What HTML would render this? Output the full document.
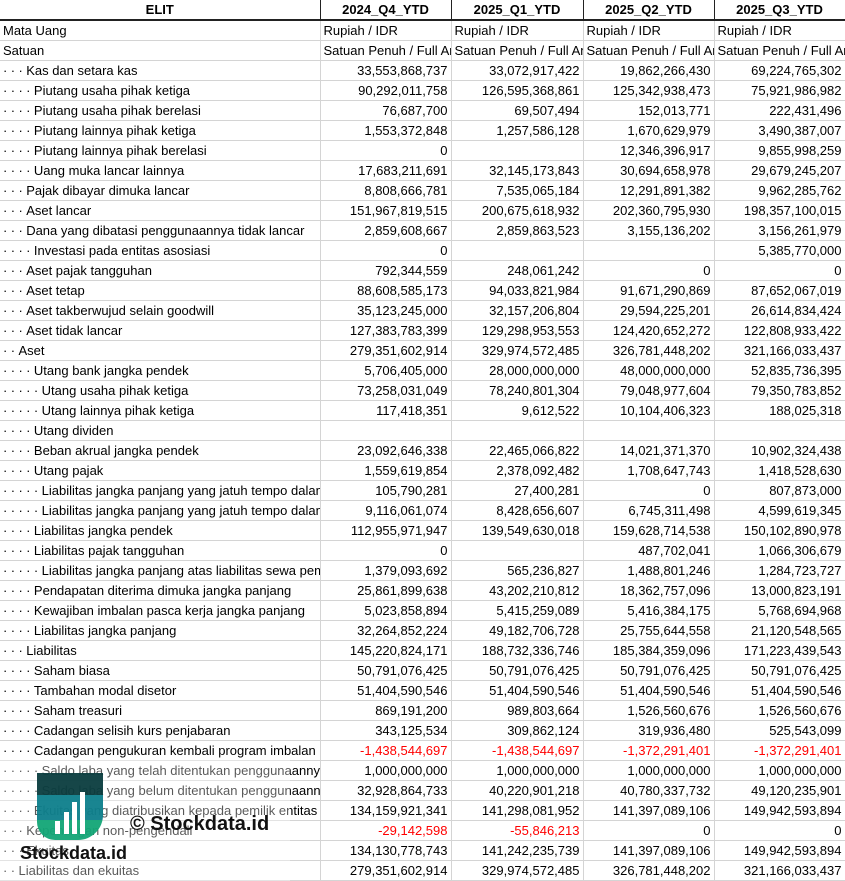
<!DOCTYPE html>
<html><head><meta charset="utf-8"><style>
body{margin:0;width:845px;height:881px;overflow:hidden;background:#fff;font-family:"Liberation Sans",sans-serif;font-size:13px;color:#000;position:relative}
table{border-collapse:collapse;table-layout:fixed;width:978px}
td{height:19px;padding:0 3px;border-right:1px solid #d4d4d4;border-bottom:1px solid #d4d4d4;white-space:nowrap;overflow:hidden;text-align:right;line-height:19px}
td.l{text-align:left}
tr.h td{font-weight:bold;text-align:center;border-right:1px solid #222;border-bottom:2px solid #222;height:18px}
i{font-style:normal;letter-spacing:3.4px}
.r{color:#f00}
.wm{position:absolute;left:0;top:760px}
</style></head><body>
<table>
<colgroup><col style="width:320px"><col style="width:131px"><col style="width:132px"><col style="width:131px"><col style="width:131px"><col style="width:133px"></colgroup>
<tr class="h"><td>ELIT</td><td>2024_Q4_YTD</td><td>2025_Q1_YTD</td><td>2025_Q2_YTD</td><td>2025_Q3_YTD</td><td></td></tr>
<tr><td class="l">Mata Uang</td><td class="l">Rupiah / IDR</td><td class="l">Rupiah / IDR</td><td class="l">Rupiah / IDR</td><td class="l">Rupiah / IDR</td><td></td></tr>
<tr><td class="l">Satuan</td><td class="l">Satuan Penuh / Full Amount</td><td class="l">Satuan Penuh / Full Amount</td><td class="l">Satuan Penuh / Full Amount</td><td class="l">Satuan Penuh / Full Amount</td><td></td></tr>
<tr><td class="l"><i>···</i>Kas dan setara kas</td><td>33,553,868,737</td><td>33,072,917,422</td><td>19,862,266,430</td><td>69,224,765,302</td><td></td></tr>
<tr><td class="l"><i>····</i>Piutang usaha pihak ketiga</td><td>90,292,011,758</td><td>126,595,368,861</td><td>125,342,938,473</td><td>75,921,986,982</td><td></td></tr>
<tr><td class="l"><i>····</i>Piutang usaha pihak berelasi</td><td>76,687,700</td><td>69,507,494</td><td>152,013,771</td><td>222,431,496</td><td></td></tr>
<tr><td class="l"><i>····</i>Piutang lainnya pihak ketiga</td><td>1,553,372,848</td><td>1,257,586,128</td><td>1,670,629,979</td><td>3,490,387,007</td><td></td></tr>
<tr><td class="l"><i>····</i>Piutang lainnya pihak berelasi</td><td>0</td><td></td><td>12,346,396,917</td><td>9,855,998,259</td><td></td></tr>
<tr><td class="l"><i>····</i>Uang muka lancar lainnya</td><td>17,683,211,691</td><td>32,145,173,843</td><td>30,694,658,978</td><td>29,679,245,207</td><td></td></tr>
<tr><td class="l"><i>···</i>Pajak dibayar dimuka lancar</td><td>8,808,666,781</td><td>7,535,065,184</td><td>12,291,891,382</td><td>9,962,285,762</td><td></td></tr>
<tr><td class="l"><i>···</i>Aset lancar</td><td>151,967,819,515</td><td>200,675,618,932</td><td>202,360,795,930</td><td>198,357,100,015</td><td></td></tr>
<tr><td class="l"><i>···</i>Dana yang dibatasi penggunaannya tidak lancar</td><td>2,859,608,667</td><td>2,859,863,523</td><td>3,155,136,202</td><td>3,156,261,979</td><td></td></tr>
<tr><td class="l"><i>····</i>Investasi pada entitas asosiasi</td><td>0</td><td></td><td></td><td>5,385,770,000</td><td></td></tr>
<tr><td class="l"><i>···</i>Aset pajak tangguhan</td><td>792,344,559</td><td>248,061,242</td><td>0</td><td>0</td><td></td></tr>
<tr><td class="l"><i>···</i>Aset tetap</td><td>88,608,585,173</td><td>94,033,821,984</td><td>91,671,290,869</td><td>87,652,067,019</td><td></td></tr>
<tr><td class="l"><i>···</i>Aset takberwujud selain goodwill</td><td>35,123,245,000</td><td>32,157,206,804</td><td>29,594,225,201</td><td>26,614,834,424</td><td></td></tr>
<tr><td class="l"><i>···</i>Aset tidak lancar</td><td>127,383,783,399</td><td>129,298,953,553</td><td>124,420,652,272</td><td>122,808,933,422</td><td></td></tr>
<tr><td class="l"><i>··</i>Aset</td><td>279,351,602,914</td><td>329,974,572,485</td><td>326,781,448,202</td><td>321,166,033,437</td><td></td></tr>
<tr><td class="l"><i>····</i>Utang bank jangka pendek</td><td>5,706,405,000</td><td>28,000,000,000</td><td>48,000,000,000</td><td>52,835,736,395</td><td></td></tr>
<tr><td class="l"><i>·····</i>Utang usaha pihak ketiga</td><td>73,258,031,049</td><td>78,240,801,304</td><td>79,048,977,604</td><td>79,350,783,852</td><td></td></tr>
<tr><td class="l"><i>·····</i>Utang lainnya pihak ketiga</td><td>117,418,351</td><td>9,612,522</td><td>10,104,406,323</td><td>188,025,318</td><td></td></tr>
<tr><td class="l"><i>····</i>Utang dividen</td><td></td><td></td><td></td><td></td><td></td></tr>
<tr><td class="l"><i>····</i>Beban akrual jangka pendek</td><td>23,092,646,338</td><td>22,465,066,822</td><td>14,021,371,370</td><td>10,902,324,438</td><td></td></tr>
<tr><td class="l"><i>····</i>Utang pajak</td><td>1,559,619,854</td><td>2,378,092,482</td><td>1,708,647,743</td><td>1,418,528,630</td><td></td></tr>
<tr><td class="l"><i>·····</i>Liabilitas jangka panjang yang jatuh tempo dalam satu tahun</td><td>105,790,281</td><td>27,400,281</td><td>0</td><td>807,873,000</td><td></td></tr>
<tr><td class="l"><i>·····</i>Liabilitas jangka panjang yang jatuh tempo dalam satu tahun</td><td>9,116,061,074</td><td>8,428,656,607</td><td>6,745,311,498</td><td>4,599,619,345</td><td></td></tr>
<tr><td class="l"><i>····</i>Liabilitas jangka pendek</td><td>112,955,971,947</td><td>139,549,630,018</td><td>159,628,714,538</td><td>150,102,890,978</td><td></td></tr>
<tr><td class="l"><i>····</i>Liabilitas pajak tangguhan</td><td>0</td><td></td><td>487,702,041</td><td>1,066,306,679</td><td></td></tr>
<tr><td class="l"><i>·····</i>Liabilitas jangka panjang atas liabilitas sewa pembiayaan</td><td>1,379,093,692</td><td>565,236,827</td><td>1,488,801,246</td><td>1,284,723,727</td><td></td></tr>
<tr><td class="l"><i>····</i>Pendapatan diterima dimuka jangka panjang</td><td>25,861,899,638</td><td>43,202,210,812</td><td>18,362,757,096</td><td>13,000,823,191</td><td></td></tr>
<tr><td class="l"><i>····</i>Kewajiban imbalan pasca kerja jangka panjang</td><td>5,023,858,894</td><td>5,415,259,089</td><td>5,416,384,175</td><td>5,768,694,968</td><td></td></tr>
<tr><td class="l"><i>····</i>Liabilitas jangka panjang</td><td>32,264,852,224</td><td>49,182,706,728</td><td>25,755,644,558</td><td>21,120,548,565</td><td></td></tr>
<tr><td class="l"><i>···</i>Liabilitas</td><td>145,220,824,171</td><td>188,732,336,746</td><td>185,384,359,096</td><td>171,223,439,543</td><td></td></tr>
<tr><td class="l"><i>····</i>Saham biasa</td><td>50,791,076,425</td><td>50,791,076,425</td><td>50,791,076,425</td><td>50,791,076,425</td><td></td></tr>
<tr><td class="l"><i>····</i>Tambahan modal disetor</td><td>51,404,590,546</td><td>51,404,590,546</td><td>51,404,590,546</td><td>51,404,590,546</td><td></td></tr>
<tr><td class="l"><i>····</i>Saham treasuri</td><td>869,191,200</td><td>989,803,664</td><td>1,526,560,676</td><td>1,526,560,676</td><td></td></tr>
<tr><td class="l"><i>····</i>Cadangan selisih kurs penjabaran</td><td>343,125,534</td><td>309,862,124</td><td>319,936,480</td><td>525,543,099</td><td></td></tr>
<tr><td class="l"><i>····</i>Cadangan pengukuran kembali program imbalan pasti</td><td class="r">-1,438,544,697</td><td class="r">-1,438,544,697</td><td class="r">-1,372,291,401</td><td class="r">-1,372,291,401</td><td></td></tr>
<tr><td class="l"><i>·····</i>Saldo laba yang telah ditentukan penggunaannya</td><td>1,000,000,000</td><td>1,000,000,000</td><td>1,000,000,000</td><td>1,000,000,000</td><td></td></tr>
<tr><td class="l"><i>·····</i>Saldo laba yang belum ditentukan penggunaannya</td><td>32,928,864,733</td><td>40,220,901,218</td><td>40,780,337,732</td><td>49,120,235,901</td><td></td></tr>
<tr><td class="l"><i>····</i>Ekuitas yang diatribusikan kepada pemilik entitas induk</td><td>134,159,921,341</td><td>141,298,081,952</td><td>141,397,089,106</td><td>149,942,593,894</td><td></td></tr>
<tr><td class="l"><i>···</i>Kepentingan non-pengendali</td><td class="r">-29,142,598</td><td class="r">-55,846,213</td><td>0</td><td>0</td><td></td></tr>
<tr><td class="l"><i>···</i>Ekuitas</td><td>134,130,778,743</td><td>141,242,235,739</td><td>141,397,089,106</td><td>149,942,593,894</td><td></td></tr>
<tr><td class="l"><i>··</i>Liabilitas dan ekuitas</td><td>279,351,602,914</td><td>329,974,572,485</td><td>326,781,448,202</td><td>321,166,033,437</td><td></td></tr>
</table>
<svg class="wm" width="300" height="121" viewBox="0 0 300 121">
<rect x="0" y="0" width="290" height="121" fill="#fff" opacity="0.35"/>
<defs><clipPath id="c"><path d="M37 13 H103 V55 A25 25 0 0 1 78 80 H55 A18 18 0 0 1 37 62 Z"/></clipPath></defs>
<g clip-path="url(#c)" opacity="0.95">
<rect x="37" y="13" width="66" height="22" fill="#0a3d3f"/>
<rect x="37" y="35" width="66" height="25" fill="#0d7f8c"/>
<rect x="37" y="60" width="66" height="22" fill="#12a676"/>
</g>
<rect x="55" y="61" width="5" height="13" fill="#fff"/>
<rect x="64" y="52" width="5" height="22" fill="#fff"/>
<rect x="72" y="42" width="5" height="32" fill="#fff"/>
<rect x="80" y="32" width="5" height="42" fill="#fff"/>
<text x="130" y="70" font-family="Liberation Sans, sans-serif" font-weight="bold" font-size="20" fill="#111">© Stockdata.id</text>
<text x="20" y="99" font-family="Liberation Sans, sans-serif" font-weight="bold" font-size="18" fill="#111">Stockdata.id</text>
</svg>
</body></html>
